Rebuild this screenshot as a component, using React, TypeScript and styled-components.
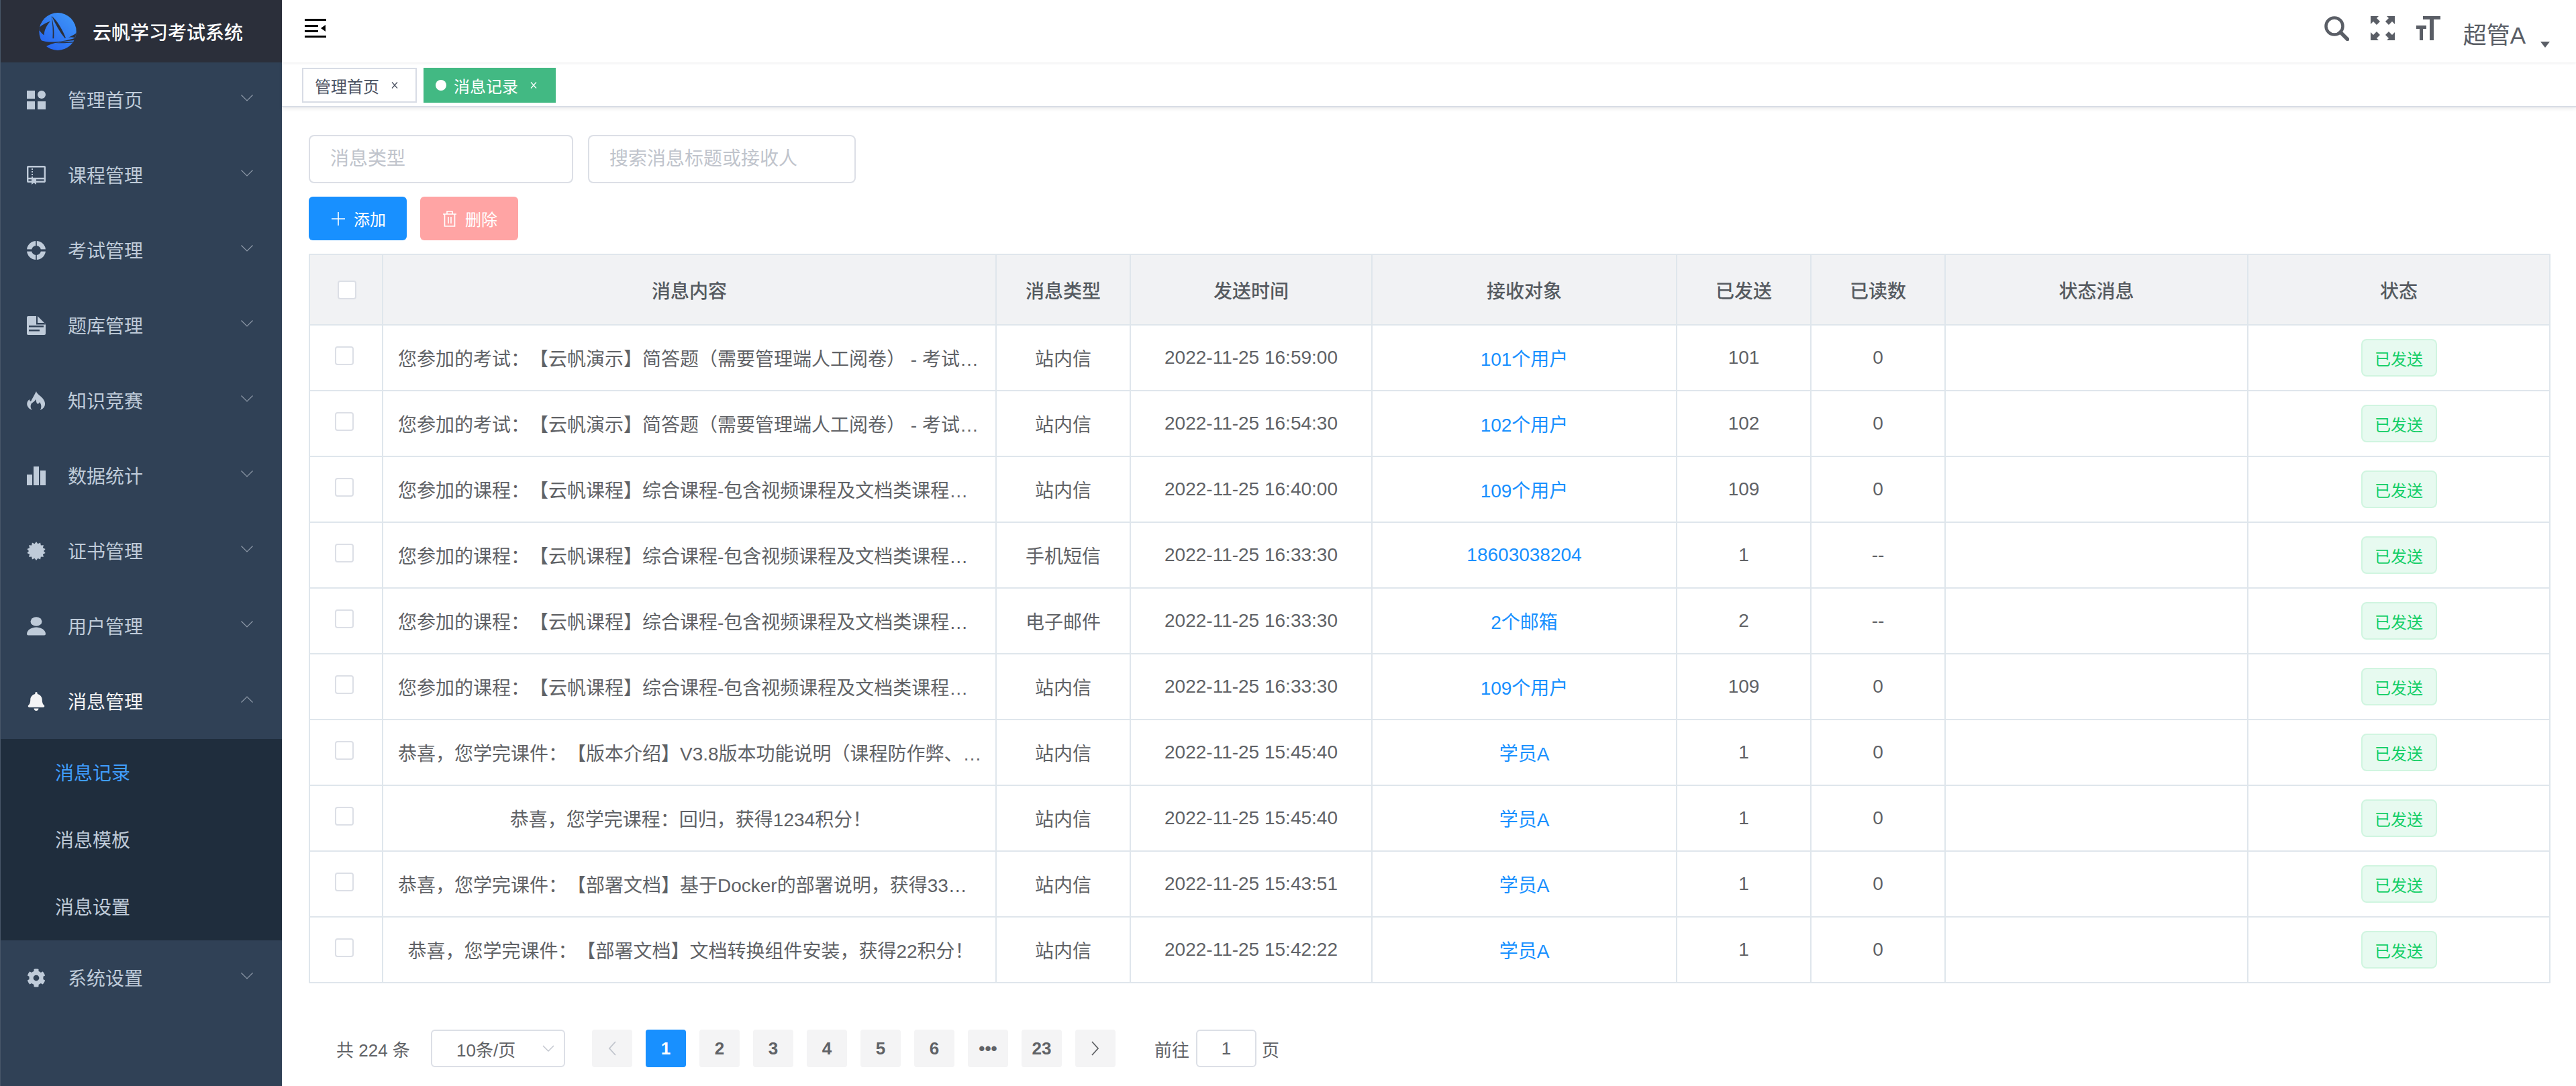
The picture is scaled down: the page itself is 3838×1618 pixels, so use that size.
import React from 'react'
import styled, { createGlobalStyle } from 'styled-components'
import { FaBell, FaCog } from 'react-icons/fa'

const menus = [
  { title: '管理首页', icon: 'dashboard' },
  { title: '课程管理', icon: 'book' },
  { title: '考试管理', icon: 'ring' },
  { title: '题库管理', icon: 'doc' },
  { title: '知识竞赛', icon: 'fire' },
  { title: '数据统计', icon: 'bars' },
  { title: '证书管理', icon: 'seal' },
  { title: '用户管理', icon: 'user' },
  { title: '消息管理', icon: 'bell', open: true, children: ['消息记录', '消息模板', '消息设置'] },
  { title: '系统设置', icon: 'gear' }
]

const exam = '您参加的考试：【云帆演示】简答题（需要管理端人工阅卷） - 考试时间'
const course = '您参加的课程：【云帆课程】综合课程-包含视频课程及文档类课程学习'

const rows = [
  { content: exam, type: '站内信', time: '2022-11-25 16:59:00', target: '101个用户', sent: '101', read: '0' },
  { content: exam, type: '站内信', time: '2022-11-25 16:54:30', target: '102个用户', sent: '102', read: '0' },
  { content: course, type: '站内信', time: '2022-11-25 16:40:00', target: '109个用户', sent: '109', read: '0' },
  { content: course, type: '手机短信', time: '2022-11-25 16:33:30', target: '18603038204', sent: '1', read: '--' },
  { content: course, type: '电子邮件', time: '2022-11-25 16:33:30', target: '2个邮箱', sent: '2', read: '--' },
  { content: course, type: '站内信', time: '2022-11-25 16:33:30', target: '109个用户', sent: '109', read: '0' },
  { content: '恭喜，您学完课件：【版本介绍】V3.8版本功能说明（课程防作弊、人脸识别）', type: '站内信', time: '2022-11-25 15:45:40', target: '学员A', sent: '1', read: '0' },
  { content: '恭喜，您学完课程：回归，获得1234积分！', type: '站内信', time: '2022-11-25 15:45:40', target: '学员A', sent: '1', read: '0' },
  { content: '恭喜，您学完课件：【部署文档】基于Docker的部署说明，获得33积分！', type: '站内信', time: '2022-11-25 15:43:51', target: '学员A', sent: '1', read: '0' },
  { content: '恭喜，您学完课件：【部署文档】文档转换组件安装，获得22积分！', type: '站内信', time: '2022-11-25 15:42:22', target: '学员A', sent: '1', read: '0' }
]

const columnWidths = [109, 914, 200, 360, 454, 200, 200, 451, 450]
const headings = ['消息内容', '消息类型', '发送时间', '接收对象', '已发送', '已读数', '状态消息', '状态']
const pages = ['1', '2', '3', '4', '5', '6', '•••', '23']

const sealPoints = Array.from({ length: 28 }, (_, i) => {
  const r = i % 2 ? 11 : 14
  const a = (i * Math.PI) / 14
  return `${14 + r * Math.sin(a)},${14 - r * Math.cos(a)}`
}).join(' ')

const MenuIcon = ({ name }: { name: string }) => {
  if (name === 'bell') return <FaBell size={28} />
  if (name === 'gear') return <FaCog size={28} />
  return (
    <svg width="28" height="28" viewBox="0 0 28 28" fill="currentColor">
      {name === 'dashboard' && (
        <>
          <rect width="12" height="12" />
          <circle cx="22" cy="6" r="6" />
          <rect y="16" width="12" height="12" />
          <rect x="16" y="16" width="12" height="12" />
        </>
      )}
      {name === 'book' && (
        <>
          <path
            fill="none"
            stroke="currentColor"
            strokeWidth="2.4"
            d="M2 1.2h24a.8.8 0 0 1 .8.8v21a.8.8 0 0 1-.8.8H2a.8.8 0 0 1-.8-.8V2a.8.8 0 0 1 .8-.8zM1 19h26"
          />
          <path d="M7 4h2v2H7zM7 8h2v2H7zM7 12h2v2H7zM7 16h2v2H7zM7 20h7v8l-3.5-2.4L7 28z" />
        </>
      )}
      {name === 'ring' && (
        <>
          <circle cx="14" cy="14" r="10.5" fill="none" stroke="currentColor" strokeWidth="7" />
          <rect y="12.4" width="28" height="3.2" fill="#304156" />
          <rect x="13.2" width="1.6" height="28" fill="#304156" />
        </>
      )}
      {name === 'doc' && (
        <>
          <path d="M2 0h14l12 12v14a2 2 0 0 1-2 2H2a2 2 0 0 1-2-2V2a2 2 0 0 1 2-2z" />
          <path fill="#304156" d="M16 0v10h10l2 2.4H14V0zM3 14h22v2.5H3zM3 20h16v2.5H3z" />
        </>
      )}
      {name === 'fire' && (
        <path d="M14 0C15 4 20 6 24 11C27 15 28 19 26 23C25 25 22 27 20 28C22 24 22 20 19 16C18 19 16 19 15 18C14 16 14 14 13 12C12 15 9 16 7 18C5 21 5 25 8 28C5 27 2 25 1 22C-1 18 1 14 4 12C4 14 5 15 6 15C8 11 11 6 14 0Z" />
      )}
      {name === 'bars' && (
        <>
          <rect y="12" width="8" height="16" />
          <rect x="10" width="8" height="28" />
          <rect x="20" y="6" width="8" height="22" />
        </>
      )}
      {name === 'seal' && <polygon points={sealPoints} />}
      {name === 'user' && (
        <>
          <ellipse cx="14" cy="7" rx="8.5" ry="6.8" />
          <path d="M0 25.5C0 19 8 15.5 14 15.5S28 19 28 25.5q0 2-2 2H2q-2 0-2-2z" />
        </>
      )}
    </svg>
  )
}

const Logo = () => (
  <svg width="56" height="56" viewBox="0 0 165 167">
    <defs>
      <linearGradient id="logoFill" x1="0.9" y1="0" x2="0.1" y2="1">
        <stop offset="0" stopColor="#3f97f8" />
        <stop offset="1" stopColor="#2461ee" />
      </linearGradient>
    </defs>
    <ellipse cx="82.5" cy="83.5" rx="82.5" ry="83.5" fill="url(#logoFill)" />
    <path
      fill="#2b2f3a"
      d="M0 66C18 50 36 42 50 38C32 56 22 80 22 100C12 92 6 84 0 78zM54 14C60 48 62 82 60 114L65 114C68 84 64 46 54 14zM56 14C84 40 104 76 118 112L115 114C92 86 72 52 56 14zM130 110C142 104 152 100 165 90L160 112C150 108 140 108 130 110zM6 122C40 134 92 134 165 110L160 122C110 126 60 132 30 150C22 142 12 132 6 122zM72 134C100 130 130 128 152 128L150 133C120 135 96 136 72 134z"
    />
  </svg>
)

const TagClose = () => (
  <CloseMark width="10" height="12" viewBox="0 0 10 12">
    <path d="M1 1.5l8 9M9 1.5l-8 9" fill="none" stroke="currentColor" strokeWidth="1.2" />
  </CloseMark>
)

const App = () => {
  return (
    <Layout>
      <GlobalStyle />
      <Sidebar>
        <Brand>
          <Logo />
          <BrandName>云帆学习考试系统</BrandName>
        </Brand>
        <nav>
          {menus.map((menu) => (
            <div key={menu.title}>
              <MenuRow $open={menu.open}>
                <MenuIcon name={menu.icon} />
                <MenuTitle>{menu.title}</MenuTitle>
                <Chevron width="18" height="10" viewBox="0 0 18 10">
                  <path d={menu.open ? 'M0.5 9.5L9 1l8.5 8.5' : 'M0.5 0.5L9 9l8.5-8.5'} fill="none" stroke="currentColor" strokeWidth="1.2" />
                </Chevron>
              </MenuRow>
              {menu.children && (
                <SubMenu>
                  {menu.children.map((child, index) => (
                    <SubItem key={child} $active={index === 0}>
                      {child}
                    </SubItem>
                  ))}
                </SubMenu>
              )}
            </div>
          ))}
        </nav>
      </Sidebar>
      <Main>
        <TopBar>
          <svg width="32" height="28" viewBox="0 0 32 28">
            <path d="M0 1.5h32M0 10.5h20M0 18.5h20M0 26.5h32" stroke="#000" strokeWidth="3" />
            <path d="M24 14l7-5v10z" fill="#000" />
          </svg>
          <TopActions>
            <svg width="37" height="37" viewBox="0 0 37 37" fill="none" stroke="currentColor">
              <circle cx="15" cy="15" r="12.5" strokeWidth="4.5" />
              <path d="M24 24l10.5 10.5" strokeWidth="5.5" strokeLinecap="round" />
            </svg>
            <svg width="36" height="36" viewBox="0 0 36 36" fill="currentColor">
              <path d="M0 0h12L9 3l5 5-5 5-5-5-4 4zM36 0H24l3 3-5 5 5 5 5-5 4 4zM0 36h12l-3-3 5-5-5-5-5 5-4-4zM36 36H24l3-3-5-5 5-5 5 5 4-4z" />
            </svg>
            <svg width="36" height="36" viewBox="0 0 36 36" fill="currentColor">
              <path d="M0 14h15v5h-5v17H5V19H0zM10 0h26v5h-10v31h-6V5H10z" />
            </svg>
            <UserName>超管A</UserName>
            <Caret />
          </TopActions>
        </TopBar>
        <TagsBar>
          <Tag>
            管理首页
            <TagClose />
          </Tag>
          <Tag $active>
            <TagDot />
            消息记录
            <TagClose />
          </Tag>
        </TagsBar>
        <Content>
          <Filters>
            <FilterInput $width={394} placeholder="消息类型" />
            <FilterInput $width={399} placeholder="搜索消息标题或接收人" />
          </Filters>
          <Actions>
            <ActionButton $color="#1890ff">
              <svg width="20" height="20" viewBox="0 0 20 20">
                <path d="M10 0v20M0 10h20" stroke="currentColor" strokeWidth="1.6" />
              </svg>
              添加
            </ActionButton>
            <ActionButton $color="#ffa4a4">
              <svg width="20" height="24" viewBox="0 0 20 24" fill="none" stroke="currentColor" strokeWidth="1.6">
                <path d="M0 5h20M6 5V1h8v4M2.5 5v18h15V5M8 9v10M12 9v10" />
              </svg>
              删除
            </ActionButton>
          </Actions>
          <TableBox>
            <Table>
              <colgroup>
                {columnWidths.map((width, index) => (
                  <col key={index} style={{ width }} />
                ))}
              </colgroup>
              <thead>
                <tr>
                  <HeadCell>
                    <Checkbox $head />
                  </HeadCell>
                  {headings.map((heading) => (
                    <HeadCell key={heading}>{heading}</HeadCell>
                  ))}
                </tr>
              </thead>
              <tbody>
                {rows.map((row, index) => (
                  <tr key={index}>
                    <Cell>
                      <Checkbox />
                    </Cell>
                    <ContentCell>{row.content}</ContentCell>
                    <Cell>{row.type}</Cell>
                    <Cell>{row.time}</Cell>
                    <Cell>
                      <TargetLink>{row.target}</TargetLink>
                    </Cell>
                    <Cell>{row.sent}</Cell>
                    <Cell>{row.read}</Cell>
                    <Cell />
                    <Cell>
                      <StatusTag>已发送</StatusTag>
                    </Cell>
                  </tr>
                ))}
              </tbody>
            </Table>
          </TableBox>
          <Pagination>
            <Total>共 224 条</Total>
            <SizeSelect>
              10条/页
              <svg width="18" height="10" viewBox="0 0 18 10">
                <path d="M1 1l8 8 8-8" fill="none" stroke="#c0c4cc" strokeWidth="1.4" />
              </svg>
            </SizeSelect>
            <Pager>
              <PageButton>
                <svg width="12" height="22" viewBox="0 0 12 22">
                  <path d="M11 1L2 11l9 10" fill="none" stroke="#c0c4cc" strokeWidth="1.8" />
                </svg>
              </PageButton>
              {pages.map((page) => (
                <PageButton key={page} $active={page === '1'}>
                  {page}
                </PageButton>
              ))}
              <PageButton>
                <svg width="12" height="22" viewBox="0 0 12 22">
                  <path d="M1 1l9 10-9 10" fill="none" stroke="#606266" strokeWidth="1.8" />
                </svg>
              </PageButton>
            </Pager>
            <Jump>
              前往
              <JumpInput>1</JumpInput>
              页
            </Jump>
          </Pagination>
        </Content>
      </Main>
    </Layout>
  )
}

const GlobalStyle = createGlobalStyle`
  * {
    box-sizing: border-box;
  }
  body {
    margin: 0;
    background: #fff;
    color: #606266;
    font-family: "Liberation Sans", "Noto Sans CJK SC", sans-serif;
    text-spacing-trim: space-all;
  }
`

const Layout = styled.div`
  display: grid;
  grid-template-columns: 420px 1fr;
  height: 100vh;
  overflow: hidden;
`

const Sidebar = styled.aside`
  background: #304156;
  color: #bfcbd9;
  border-left: 1px solid #475668;
`

const Brand = styled.div`
  display: flex;
  align-items: center;
  gap: 24px;
  height: 93px;
  padding-left: 57px;
  background: #2b2f3a;
`

const BrandName = styled.span`
  color: #fff;
  font-size: 28px;
  font-weight: 500;
`

const MenuRow = styled.div<{ $open?: boolean }>`
  display: flex;
  align-items: center;
  height: 112px;
  padding: 0 43px 0 39px;
  color: ${(p) => (p.$open ? '#f4f4f5' : '#bfcbd9')};
`

const MenuTitle = styled.span`
  margin: -2px 0 0 33px;
  font-size: 28px;
`

const Chevron = styled.svg`
  margin: -6px 0 0 auto;
  color: #8e99a8;
`

const SubMenu = styled.div`
  background: #1f2d3d;
`

const SubItem = styled.div<{ $active?: boolean }>`
  display: flex;
  align-items: center;
  height: 100px;
  padding: 0 0 2px 81px;
  font-size: 28px;
  color: ${(p) => (p.$active ? '#409eff' : '#bfcbd9')};
`

const Main = styled.main`
  min-width: 0;
`

const TopBar = styled.header`
  display: flex;
  justify-content: space-between;
  align-items: flex-start;
  height: 93px;
  padding: 28px 39px 0 34px;
  background: #fff;
  box-shadow: 0 1px 4px rgba(0, 21, 41, 0.08);
  position: relative;
`

const TopActions = styled.div`
  display: flex;
  align-items: flex-start;
  gap: 32px;
  margin-top: -4px;
  color: #5a5e66;
`

const UserName = styled.span`
  margin: 5px 0 0 2px;
  font-size: 35px;
  line-height: 48px;
`

const Caret = styled.i`
  width: 0;
  height: 0;
  margin: 38px 0 0 -10px;
  border-left: 7.5px solid transparent;
  border-right: 7.5px solid transparent;
  border-top: 9px solid #5a5e66;
`

const TagsBar = styled.div`
  display: flex;
  gap: 10px;
  height: 67px;
  padding: 8px 0 0 30px;
  background: #fff;
  border-bottom: 2px solid #d8dce5;
  box-shadow: 0 2px 6px rgba(0, 0, 0, 0.08);
`

const Tag = styled.div<{ $active?: boolean }>`
  display: flex;
  align-items: center;
  height: 52px;
  padding: 0 26px 0 ${(p) => (p.$active ? '16px' : '17px')};
  font-size: 24px;
  color: ${(p) => (p.$active ? '#fff' : '#495060')};
  background: ${(p) => (p.$active ? '#42b983' : '#fff')};
  border: 2px solid ${(p) => (p.$active ? '#42b983' : '#d8dce5')};
`

const TagDot = styled.i`
  width: 16px;
  height: 16px;
  margin-right: 11px;
  border-radius: 50%;
  background: #fff;
`

const CloseMark = styled.svg`
  margin-left: 18px;
`

const Content = styled.div`
  padding: 41px 38px 0 40px;
`

const Filters = styled.div`
  display: flex;
  gap: 22px;
`

const FilterInput = styled.input<{ $width: number }>`
  width: ${(p) => p.$width}px;
  height: 72px;
  padding: 0 30px;
  border: 2px solid #dcdfe6;
  border-radius: 8px;
  outline: none;
  font: inherit;
  font-size: 28px;
  color: #606266;
  &::placeholder {
    color: #c0c4cc;
  }
`

const Actions = styled.div`
  display: flex;
  gap: 20px;
  margin-top: 20px;
`

const ActionButton = styled.button<{ $color: string }>`
  display: flex;
  align-items: center;
  gap: 13px;
  width: 146px;
  height: 65px;
  padding: 0 0 0 34px;
  border: 0;
  border-radius: 6px;
  background: ${(p) => p.$color};
  color: #fff;
  font: inherit;
  font-size: 24px;
`

const TableBox = styled.div`
  width: 3340px;
  margin-top: 20px;
  border-top: 2px solid #dfe6ec;
  border-left: 2px solid #dfe6ec;
`

const Table = styled.table`
  width: 100%;
  table-layout: fixed;
  border-collapse: separate;
  border-spacing: 0;
  font-size: 28px;
  color: #606266;
`

const HeadCell = styled.th`
  height: 105px;
  padding: 0;
  background: #f1f2f4;
  color: #555a60;
  font-weight: 500;
  text-align: center;
  border-right: 2px solid #dfe6ec;
  border-bottom: 2px solid #dfe6ec;
`

const Cell = styled.td`
  height: 98px;
  padding: 0;
  text-align: center;
  border-right: 2px solid #dfe6ec;
  border-bottom: 2px solid #dfe6ec;
`

const ContentCell = styled(Cell)`
  padding: 0 18px 0 22px;
  white-space: nowrap;
  overflow: hidden;
  text-overflow: ellipsis;
`

const Checkbox = styled.span<{ $head?: boolean }>`
  display: block;
  width: 28px;
  height: 28px;
  margin: ${(p) => (p.$head ? '1px 0 0 41px' : '-6px 0 0 37px')};
  border: 2px solid #dcdfe6;
  border-radius: 4px;
  background: #fff;
`

const TargetLink = styled.a`
  color: #1890ff;
`

const StatusTag = styled.span`
  display: inline-flex;
  align-items: center;
  justify-content: center;
  width: 113px;
  height: 56px;
  vertical-align: middle;
  border: 2px solid #d0f5e0;
  border-radius: 8px;
  background: #e7faf0;
  color: #13ce66;
  font-size: 24px;
`

const Pagination = styled.div`
  display: flex;
  align-items: center;
  height: 56px;
  margin-top: 69px;
  padding-left: 41px;
  font-size: 26px;
  color: #606266;
`

const Total = styled.span`
  width: 141px;
`

const SizeSelect = styled.div`
  display: flex;
  align-items: center;
  justify-content: space-between;
  width: 200px;
  height: 56px;
  padding: 0 14px 0 36px;
  border: 2px solid #dcdfe6;
  border-radius: 6px;
`

const Pager = styled.div`
  display: flex;
  gap: 20px;
  margin-left: 40px;
`

const PageButton = styled.div<{ $active?: boolean }>`
  display: flex;
  align-items: center;
  justify-content: center;
  width: 60px;
  height: 56px;
  border-radius: 4px;
  background: ${(p) => (p.$active ? '#1890ff' : '#f4f4f5')};
  color: ${(p) => (p.$active ? '#fff' : '#606266')};
  font-weight: 700;
`

const Jump = styled.div`
  display: flex;
  align-items: center;
  margin-left: 58px;
`

const JumpInput = styled.span`
  display: flex;
  align-items: center;
  justify-content: center;
  width: 90px;
  height: 56px;
  margin: 0 8px 0 10px;
  border: 2px solid #dcdfe6;
  border-radius: 6px;
`

export default App
